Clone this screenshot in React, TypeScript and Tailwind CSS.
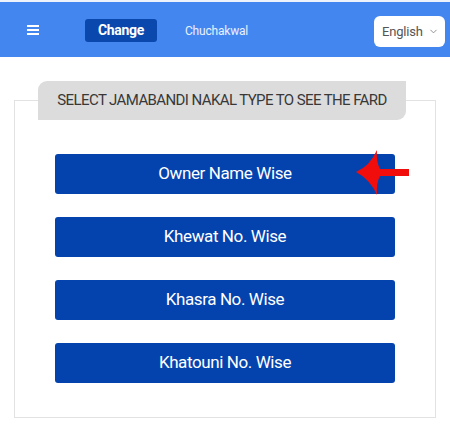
import React from "react";
import { ChevronDown } from "lucide-react";

const types = ["Owner Name Wise", "Khewat No. Wise", "Khasra No. Wise", "Khatouni No. Wise"];

const App = () => {
  return (
    <div className="w-[450px] h-[430px] bg-white font-['Roboto',sans-serif] overflow-hidden">
      {/* Header */}
      <div className="border-t-2 border-[#eef3fb] bg-[#4486f0] h-[57px] flex items-center">
        <div className="ml-[27px] flex flex-col gap-[2px] mt-[1px]">
          <span className="block w-[12px] h-[2px] bg-white" />
          <span className="block w-[12px] h-[2px] bg-white" />
          <span className="block w-[12px] h-[2px] bg-white" />
        </div>
        <button className="ml-[46px] mt-[2px] w-[72px] h-[23px] bg-[#0a48ad] rounded-[3px] text-white text-[14px] font-bold tracking-[-0.3px]">
          Change
        </button>
        <span className="ml-[28px] mt-[2px] text-[12px] text-[#eaf1fd] tracking-[-0.2px]">Chuchakwal</span>
        <div className="ml-auto mr-[5px] mt-[4px] w-[71px] h-[31px] bg-white rounded-[6px] flex items-center pl-[8px] gap-[5px]">
          <span className="text-[13px] text-[#555] tracking-[-0.2px]">English</span>
          <ChevronDown size={11} strokeWidth={2} className="text-[#888]" />
        </div>
      </div>

      {/* Nakal type box */}
      <div className="relative pt-[24px]">
        <fieldset className="mx-[14px] min-w-0 border border-[#e2e2e2] p-0 pb-[34px]">
          <legend className="ml-[23px] w-[368px] h-[39px] p-0 bg-[#dcdcdc] rounded-tl-[9px] rounded-br-[9px] flex items-center justify-center text-[15px] text-[#383838] tracking-[-0.6px]">
            SELECT JAMABANDI NAKAL TYPE TO SEE THE FARD
          </legend>
          <div className="mt-[34px] px-[40px] flex flex-col gap-[23px]">
            {types.map((t) => (
              <button
                key={t}
                className="h-[40px] w-full bg-[#0443ae] rounded-[3px] text-white text-[17px] tracking-[-0.4px]"
              >
                {t}
              </button>
            ))}
          </div>
        </fieldset>

        {/* Red pointer arrow */}
        <svg
          className="absolute left-[350px] top-[89px]"
          width="62"
          height="54"
          viewBox="0 0 62 54"
        >
          <path
            d="M6 26 Q20 20 27 4 Q26 16 30 23 L59 23 L59 30 L30 30 Q26 37 27 49 Q20 33 6 26 Z"
            fill="#f20d0d"
          />
        </svg>
      </div>
    </div>
  );
};

export default App;
